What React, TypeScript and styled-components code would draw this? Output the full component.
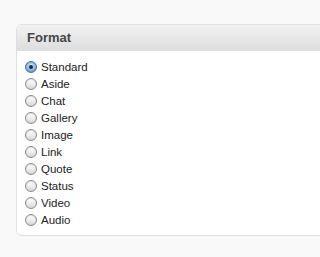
import React, { useState } from "react";
import styled, { createGlobalStyle } from "styled-components";

const GlobalStyle = createGlobalStyle`
  html, body {
    margin: 0;
    padding: 0;
    background: #f9f9f9;
    overflow: hidden;
  }
  body {
    font-family: "Liberation Sans", Arial, sans-serif;
  }
`;

const Page = styled.div`
  width: 100vw;
  height: 257px;
  padding: 24px 0 0 16px;
  box-sizing: border-box;
  overflow: hidden;
`;

const Box = styled.div`
  width: calc(100% + 30px);
  background: #fff;
  border: 1px solid #dfdfdf;
  border-radius: 6px;
  box-sizing: border-box;
  height: 212px;
`;

const Header = styled.h3`
  margin: 0;
  height: 26px;
  box-sizing: border-box;
  padding: 0 0 1px 10px;
  display: flex;
  align-items: center;
  font-size: 13px;
  font-weight: bold;
  color: #464646;
  background: linear-gradient(to bottom, #f1f1f1, #dedede);
  border-bottom: 1px solid #dfdfdf;
  border-radius: 5px 5px 0 0;
`;

const List = styled.div`
  display: flex;
  flex-direction: column;
  padding: 7px 0 0 8px;
`;

const Row = styled.label`
  display: flex;
  align-items: center;
  height: 17px;
  gap: 4px;
  font-size: 11.5px;
  color: #222;
  cursor: pointer;
`;

const Dot = styled.span<{ $on: boolean }>`
  width: 12px;
  height: 12px;
  border-radius: 50%;
  box-sizing: border-box;
  border: 1px solid ${(p) => (p.$on ? "#4a6f9c" : "#8a8a8a")};
  background: ${(p) =>
    p.$on
      ? "radial-gradient(circle at 50% 35%, #d4e9fc 0%, #86b8e8 55%, #3f82cf 100%)"
      : "linear-gradient(to bottom, #ffffff 0%, #ececec 55%, #d4d4d4 100%)"};
  box-shadow: inset 0 1px 1px rgba(0, 0, 0, 0.12);
  display: flex;
  align-items: center;
  justify-content: center;
  flex-shrink: 0;
  &::after {
    content: "";
    display: ${(p) => (p.$on ? "block" : "none")};
    width: 4px;
    height: 4px;
    border-radius: 50%;
    background: #1a2a3c;
  }
`;

const formats = ["Standard", "Aside", "Chat", "Gallery", "Image", "Link", "Quote", "Status", "Video", "Audio"];

export default function App() {
  const [picked, setPicked] = useState("Standard");
  return (
    <>
      <GlobalStyle />
      <Page>
        <Box>
          <Header>Format</Header>
          <List>
            {formats.map((f) => (
              <Row key={f} onClick={() => setPicked(f)}>
                <Dot $on={picked === f} />
                {f}
              </Row>
            ))}
          </List>
        </Box>
      </Page>
    </>
  );
}
